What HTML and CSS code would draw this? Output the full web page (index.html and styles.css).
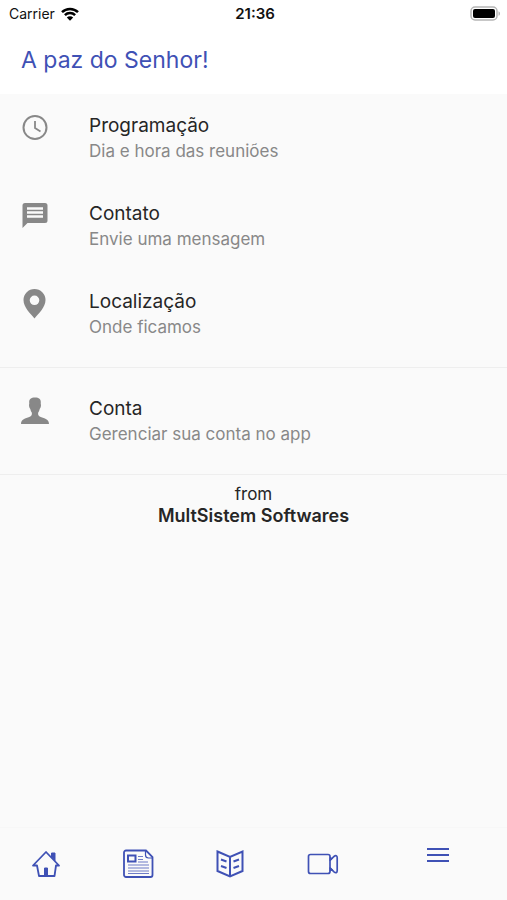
FILE: index.html
```
<!DOCTYPE html>
<html lang="pt-BR">
<head>
  <meta charset="UTF-8">
  <meta name="viewport" content="width=device-width, initial-scale=1">
  <title>A paz do Senhor!</title>
  <link rel="stylesheet" href="styles.css">
</head>
<body>

  <header class="header">
    <div class="status">
      <div class="carrier">
        <span>Carrier</span>
        <svg class="wifi" viewBox="0 0 18 14" width="18" height="14">
          <path d="M1 5.2a11.3 11.3 0 0 1 16 0M3.9 8.2a7.2 7.2 0 0 1 10.2 0" fill="none" stroke="#000" stroke-width="2.5"/>
          <path d="M5.8 10.5a4.5 4.5 0 0 1 6.4 0L9 13.7z" fill="#000"/>
        </svg>
      </div>
      <strong class="clock">21:36</strong>
      <svg class="battery" viewBox="0 0 31 15" width="31" height="15">
        <rect x="1" y="1" width="26" height="13" rx="4" fill="#fff" stroke="#b5b5b5" stroke-width="1.5"/>
        <rect x="3" y="3" width="22" height="9" rx="2" fill="#000"/>
        <path d="M28.5 5.2c2 .8 2 3.8 0 4.6z" fill="#b5b5b5"/>
      </svg>
    </div>
    <h1 class="title">A paz do Senhor!</h1>
  </header>

  <main class="content">
    <a href="#programacao" class="item">
      <svg class="icon" viewBox="0 0 28 30" width="28" height="30">
        <circle cx="14" cy="13.5" r="11.5" fill="none" stroke="#888" stroke-width="2"/>
        <path d="M14 7v7l5.5 3.5" fill="none" stroke="#888" stroke-width="1.8"/>
      </svg>
      <span class="text">
        <span class="name">Programação</span>
        <span class="detail">Dia e hora das reuniões</span>
      </span>
    </a>

    <a href="#contato" class="item">
      <svg class="icon" viewBox="0 0 28 30" width="28" height="30">
        <path d="M4 1h20a2.5 2.5 0 0 1 2.5 2.500v15a2.5 2.5 0 0 1-2.5 2.500H6.500l-5 5V3.500A2.5 2.5 0 0 1 4 1z" fill="#888"/>
        <path d="M6 6.500h16M6 10.500h16M6 14.500h16" stroke="#fafafa" stroke-width="2.6"/>
      </svg>
      <span class="text">
        <span class="name">Contato</span>
        <span class="detail">Envie uma mensagem</span>
      </span>
    </a>

    <a href="#localizacao" class="item">
      <svg class="icon" viewBox="0 0 28 30" width="28" height="30">
        <path d="M13.500 -1A11 11 0 0 0 2.500 10c0 7.500 7 13.500 11 18.500 4-5 11-11 11-18.500a11 11 0 0 0-11-11zm0 6.500a4.8 4.8 0 1 1 0 9.600 4.800 4.800 0 0 1 0-9.600z" fill="#888" fill-rule="evenodd"/>
      </svg>
      <span class="text">
        <span class="name">Localização</span>
        <span class="detail">Onde ficamos</span>
      </span>
    </a>

    <hr class="divider">

    <a href="#conta" class="item">
      <svg class="icon" viewBox="0 0 28 30" width="28" height="30">
        <path d="M14 0.500c-4 0-6 1.500-5.800 5 .1 1 .1 1.500-.2 2.500 0 2 .7 3 1.300 4 .4 2 1 2.800 1.500 3.500.5 2.500-.3 3.500-2.500 4.500C4.500 21.500 0 22 0 27h28c0-5-4.500-5.500-8.300-7-2.200-1-3-2-2.500-4.500.5-.7 1.100-1.500 1.500-3.500.6-1 1.300-2 1.300-4-.3-1-.3-1.500-.2-2.500C20 2 18 .5 14 .5z" fill="#888"/>
      </svg>
      <span class="text">
        <span class="name">Conta</span>
        <span class="detail">Gerenciar sua conta no app</span>
      </span>
    </a>

    <hr class="divider">

    <p class="from">from<br><strong>MultSistem Softwares</strong></p>
  </main>

  <nav class="tabs">
    <a href="#inicio" class="tab" aria-label="Início">
      <svg viewBox="0 0 32 32" width="32" height="32" fill="none" stroke="#3f51b5" stroke-width="1.8">
        <path d="M3 17.500L16 4l13 13.500h-3L24.500 28H9L7 17.500z" stroke-linejoin="round"/>
        <path d="M21.500 5h3.500v7.500l-3.500-3.500zM14.500 20h3v8h-3z" fill="#3f51b5" stroke-width="1"/>
      </svg>
    </a>
    <a href="#noticias" class="tab" aria-label="Notícias">
      <svg viewBox="0 0 32 32" width="32" height="32" fill="none" stroke="#3f51b5" stroke-width="1.8">
        <path d="M4 2.500h20l6.500 6.500V27a2 2 0 0 1-2 2H4a2 2 0 0 1-2-2V4.500a2 2 0 0 1 2-2z"/>
        <path d="M23.500 2.500V7a3 3 0 0 0 3 3h4" stroke-width="1.2"/>
        <rect x="6" y="7.5" width="7.5" height="6" stroke-width="2"/>
        <path d="M16 8.500h5M16 11.500h5M16 14h10M6 17h21M6 20h21M6 23h21M6 25.500h21" stroke-width="1.200" opacity=".75"/>
      </svg>
    </a>
    <a href="#biblia" class="tab" aria-label="Bíblia">
      <svg viewBox="0 0 32 32" width="32" height="32" fill="none" stroke="#3f51b5" stroke-width="2">
        <path d="M3.500 3.500L16 9l12.500-5.500V23L16 28.500 3.500 23zM16 9v19"/>
        <path d="M7 11.500l5.500 2M7 18l5.500 2M25 11.500l-5.500 2M25 18l-5.500 2"/>
      </svg>
    </a>
    <a href="#videos" class="tab" aria-label="Vídeos">
      <svg viewBox="0 0 32 32" width="32" height="32" fill="none" stroke="#3f51b5" stroke-width="1.7">
        <rect x="1.5" y="6.5" width="21.5" height="19" rx="2"/>
        <path d="M23 12.500l4-4c1.800-1.500 3.200-.8 3.200 1.200v13c0 2-1.400 2.700-3.200 1.200l-4-4"/>
        <path d="M23 9.500l2.500 1-2.500 2.500zM23 19.500l2.500 2.500-2.500 1z" fill="#3f51b5" stroke-width="1"/>
      </svg>
    </a>
    <a href="#menu" class="tab active" aria-label="Menu">
      <svg viewBox="0 0 32 32" width="32" height="32">
        <path d="M5 10h22M5 16h22M5 22h22" stroke="#3f51b5" stroke-width="2.2"/>
      </svg>
    </a>
  </nav>

</body>
</html>
```
FILE: styles.css
```
* {
  box-sizing: border-box;
}

body {
  margin: 0;
  min-height: 100vh;
  display: flex;
  flex-direction: column;
  background: #fafafa;
  color: #262626;
  font-family: Inter, sans-serif;
}

.header {
  background: #fff;
  padding-bottom: 18px;
}

.status {
  display: grid;
  grid-template-columns: 1fr auto 1fr;
  align-items: center;
  height: 27px;
  padding: 0 6px 0 9px;
  font-size: 14px;
  color: #111;
}

.carrier {
  display: flex;
  align-items: center;
  gap: 6px;
}

.clock {
  font-size: 15px;
  font-weight: 600;
}

.battery {
  justify-self: end;
}

.title {
  margin: 0;
  padding: 17px 21px 0;
  font-size: 23px;
  line-height: 32px;
  font-weight: 400;
  color: #3f51b5;
}

.content {
  flex: 1;
}

.item {
  display: flex;
  gap: 40px;
  height: 88px;
  padding: 20px 21px 0;
  color: inherit;
  text-decoration: none;
}

.icon {
  flex: none;
  overflow: visible;
}

.text {
  display: flex;
  flex-direction: column;
}

.name {
  font-size: 19px;
  line-height: 24px;
}

.detail {
  font-size: 17px;
  line-height: 26px;
  color: #888;
}

.divider {
  height: 1px;
  margin: 9px 0;
  border: 0;
  background: #eee;
}

.from {
  margin: 0;
  font-size: 17px;
  line-height: 21px;
  text-align: center;
}

.from strong {
  font-size: 18px;
  font-weight: 600;
}

.tabs {
  display: flex;
  height: 73px;
  border-top: 1px solid #f7f7f7;
}

.tab {
  flex: 2;
  display: flex;
  align-items: center;
  justify-content: center;
}

.active {
  flex: 3;
  padding-bottom: 18px;
}
```
